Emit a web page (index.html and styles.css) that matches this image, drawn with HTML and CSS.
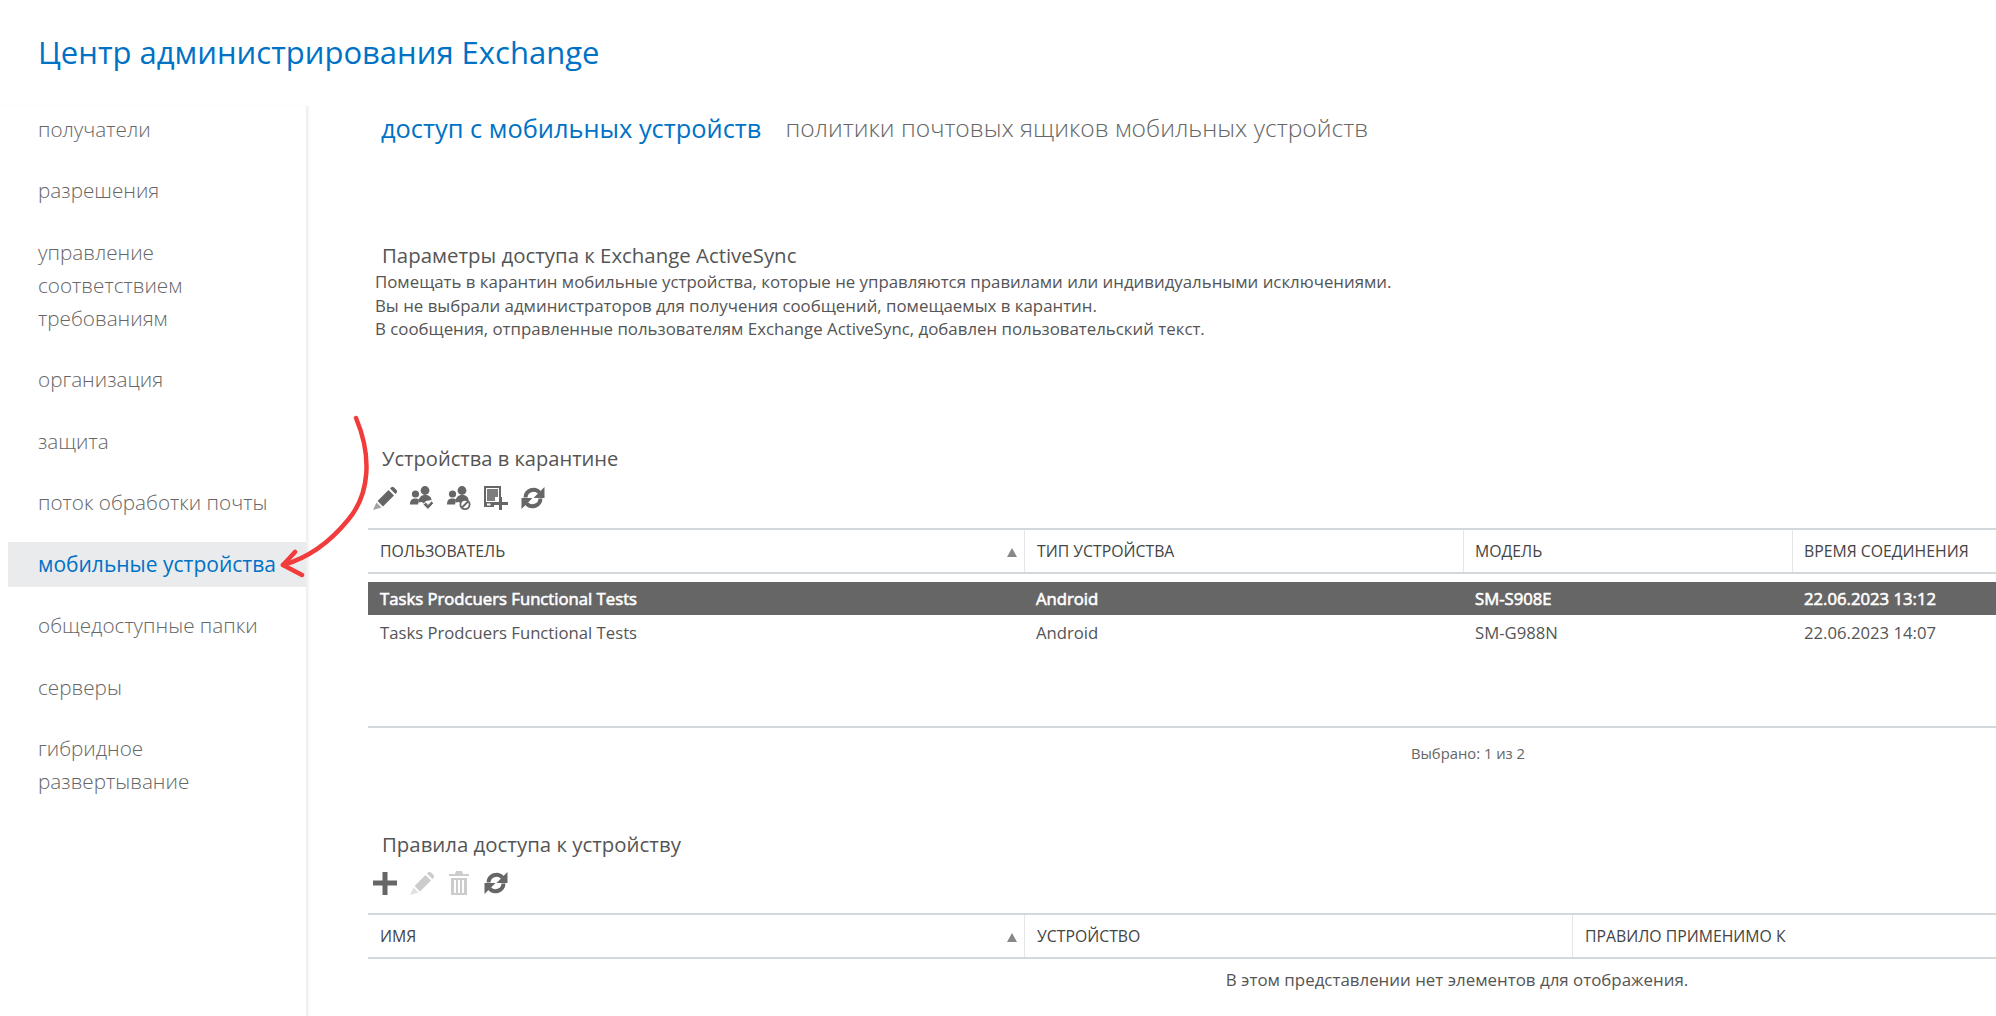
FILE: index.html
```html
<!DOCTYPE html>
<html lang="ru">
<head>
<meta charset="utf-8">
<title>Центр администрирования Exchange</title>
<link rel="stylesheet" href="styles.css">
</head>
<body>
<svg width="0" height="0" class="defs">
  <defs>
    <symbol id="i-pencil" viewBox="0 0 24 24"><path d="M4.500 15L15.500 4 21 9.500 10 20.500z"/><path d="M17 2.500l1-1c1-1 2.200-1 3 0l2.500 2.500c.8.8.8 2 0 3l-1 1z"/><path opacity=".6" d="M3.500 16.500l5 5L0 24z"/></symbol>
    <symbol id="i-people" viewBox="0 0 24 24"><circle cx="5.500" cy="8" r="3.600"/><path d="M0 18.500c0-4.500 2-6 5.500-6 1.500 0 2.500.3 3.500 1L8 18.500z"/><circle cx="15" cy="4.500" r="4.400"/><path d="M8.500 16.500c0-5 2.500-7.500 6.500-7.500s6.500 2 6.500 5l-5.500 1-2 3-2-2z"/></symbol>
    <symbol id="i-device" viewBox="0 0 24 24"><path fill-rule="evenodd" d="M0 0h17v11h-2V2H2v14h8v5H0zM3 17.500h3.500V19.500H3z"/><path class="icon-screen" d="M3 3h11v8h-3v4H3z"/><path d="M15 11h3v5h6v3h-6v5h-3v-5h-5v-3h5z"/></symbol>
    <symbol id="i-refresh" viewBox="0 0 24 24"><path class="icon-arc" d="M4.500 11.500A8 8 0 0 1 18.500 6.500"/><path d="M23.500 1v11h-11z"/><path class="icon-arc" d="M19.500 12.500A8 8 0 0 1 5.500 17.500"/><path d="M.5 23V12h11z"/></symbol>
    <symbol id="i-plus" viewBox="0 0 24 24"><path d="M9.500 1h5v8.500H24v5h-9.500V24h-5v-9.500H0v-5h9.500z"/></symbol>
    <symbol id="i-trash" viewBox="0 0 24 24"><path fill-rule="evenodd" d="M9 0h6l1 3h6v2H2V3h6zM4 7h16v17H4zM7 9v13h2V9zM11 9v13h2V9zM15 9v13h2V9z"/></symbol>
  </defs>
</svg>

<header class="page-header"><h1 class="app-title">Центр администрирования Exchange</h1></header>

<div class="layout">
  <nav class="sidebar">
    <a class="nav-item">получатели</a>
    <a class="nav-item">разрешения</a>
    <a class="nav-item">управление<br>соответствием<br>требованиям</a>
    <a class="nav-item">организация</a>
    <a class="nav-item">защита</a>
    <a class="nav-item">поток обработки почты</a>
    <a class="nav-item nav-item-active">мобильные устройства</a>
    <a class="nav-item">общедоступные папки</a>
    <a class="nav-item">серверы</a>
    <a class="nav-item">гибридное<br>развертывание</a>
  </nav>

  <main class="content">
    <div class="tabs">
      <span class="tab tab-active">доступ с мобильных устройств</span>
      <span class="tab">политики почтовых ящиков мобильных устройств</span>
    </div>

    <section class="settings">
      <h2 class="section-title">Параметры доступа к Exchange ActiveSync</h2>
      <p class="settings-line">Помещать в карантин мобильные устройства, которые не управляются правилами или индивидуальными исключениями.</p>
      <p class="settings-line">Вы не выбрали администраторов для получения сообщений, помещаемых в карантин.</p>
      <p class="settings-line">В сообщения, отправленные пользователям Exchange ActiveSync, добавлен пользовательский текст.</p>
    </section>

    <section class="quarantine">
      <h2 class="section-title section-title-narrow">Устройства в карантине</h2>
      <div class="toolbar">
        <svg class="icon"><use href="#i-pencil"/></svg>
        <svg class="icon" viewBox="0 0 24 24"><use href="#i-people" width="24" height="24"/><path class="icon-check" d="M13 18.500l3-2.500 2 2.500 4-4 1.500 3-5.500 6z"/></svg>
        <svg class="icon" viewBox="0 0 24 24"><use href="#i-people" width="24" height="24"/><circle class="icon-ring" cx="18" cy="18.500" r="4.600"/><path class="icon-slash" d="M15 21.500l6-6"/></svg>
        <svg class="icon"><use href="#i-device"/></svg>
        <svg class="icon"><use href="#i-refresh"/></svg>
      </div>
      <div class="grid grid-devices">
        <div class="grid-head">
          <div class="head-cell head-sorted">ПОЛЬЗОВАТЕЛЬ<span class="sort-arrow"></span></div>
          <div class="head-cell">ТИП УСТРОЙСТВА</div>
          <div class="head-cell">МОДЕЛЬ</div>
          <div class="head-cell">ВРЕМЯ СОЕДИНЕНИЯ</div>
        </div>
        <div class="grid-body">
          <div class="grid-row grid-row-selected"><div class="cell">Tasks Prodcuers Functional Tests</div><div class="cell">Android</div><div class="cell">SM-S908E</div><div class="cell">22.06.2023 13:12</div></div>
          <div class="grid-row"><div class="cell">Tasks Prodcuers Functional Tests</div><div class="cell">Android</div><div class="cell">SM-G988N</div><div class="cell">22.06.2023 14:07</div></div>
        </div>
        <div class="grid-foot">Выбрано: 1 из 2</div>
      </div>
    </section>

    <section class="rules">
      <h2 class="section-title">Правила доступа к устройству</h2>
      <div class="toolbar">
        <svg class="icon"><use href="#i-plus"/></svg>
        <svg class="icon icon-disabled"><use href="#i-pencil"/></svg>
        <svg class="icon icon-disabled"><use href="#i-trash"/></svg>
        <svg class="icon"><use href="#i-refresh"/></svg>
      </div>
      <div class="grid grid-rules">
        <div class="grid-head">
          <div class="head-cell head-sorted">ИМЯ<span class="sort-arrow"></span></div>
          <div class="head-cell">УСТРОЙСТВО</div>
          <div class="head-cell">ПРАВИЛО ПРИМЕНИМО К</div>
        </div>
        <div class="grid-empty">В этом представлении нет элементов для отображения.</div>
      </div>
    </section>
  </main>
</div>

<svg class="annotation" viewBox="0 0 120 200" width="120" height="200">
  <path d="M76 6C92 44 90 82 68 108 50 130 28 146 3 153" />
  <path d="M15 140L3 153 22 163" />
</svg>
</body>
</html>
```

FILE: styles.css
```css
* { box-sizing: border-box; }
html, body { margin: 0; height: 100%; }
body {
  position: relative;
  overflow: hidden;
  background: #fff;
  color: #666;
  font-family: "Open Sans", "Noto Sans", sans-serif;
}
.defs { position: absolute; }
.page-header { height: 106px; padding: 30px 0 0 38px; }
.app-title {
  margin: 0;
  font-size: 31px;
  line-height: 44px;
  font-weight: 400;
  color: #0072c6;
}
.layout { display: flex; height: 910px; }
.sidebar {
  flex: 0 0 308px;
  padding: 0.500px 0 0 8px;
  border-right: 2px solid #f0f0f0;
  box-shadow: 1px 0 2px rgba(0,0,0,.05);
}
.nav-item {
  display: block;
  padding: 6px 0 6px 30px;
  margin-bottom: 16.500px;
  font-size: 20.700px;
  font-weight: 300;
  line-height: 33px;
  color: #666;
}
.nav-item-active { background: #eaebed; color: #0072c6; font-weight: 400; font-size: 21px; }
.content { flex: 1 1 0; min-width: 0; overflow: hidden; padding-left: 60px; }
.tabs { display: flex; gap: 24px; padding: 3px 0 0 13px; height: 127px; }
.tab { font-size: 24.600px; line-height: 38px; font-weight: 300; color: #666; white-space: nowrap; }
.tab-active { color: #0072c6; font-weight: 400; font-size: 25.400px; }
.section-title {
  margin: 0;
  padding-left: 14px;
  font-size: 20.400px;
  font-weight: 400;
  line-height: 30px;
  color: #555;
}
.section-title-narrow { font-size: 20.100px; }
.settings { height: 211px; padding-top: 7px; }
.settings-line { margin: 0; padding-left: 7px; font-size: 16.840px; line-height: 23.500px; color: #555; white-space: nowrap; }
.toolbar { display: flex; gap: 13px; padding: 12px 0 0 5px; height: 54px; }
.icon { width: 24px; height: 24px; fill: #666; color: #666; flex: none; }
.icon-disabled { fill: #ccc; color: #ccc; }
.icon-screen { fill: #7d7d7d; }
.icon-arc { fill: none; stroke: currentColor; stroke-width: 4; }
.icon-check { fill: #666; stroke: #fff; stroke-width: 1; }
.icon-ring { fill: #fff; stroke: #666; stroke-width: 1.800; }
.icon-slash { stroke: #666; stroke-width: 1.800; fill: none; }
.grid { width: 2200px; color: #555; }
.grid-head {
  display: grid;
  height: 46px;
  border-top: 2px solid #d2d8dc;
  border-bottom: 2px solid #d2d8dc;
  font-size: 15.800px;
  align-items: stretch;
}
.grid-devices .grid-head, .grid-row { display: grid; grid-template-columns: 656px 439px 329px 1fr; }
.grid-rules .grid-head { grid-template-columns: 656px 548px 1fr; }
.head-cell {
  position: relative;
  display: flex;
  align-items: center;
  padding-left: 12px;
  border-left: 1px solid #e4e7e9;
  color: #444;
}
.head-cell:first-child { border-left: 0; }
.grid-devices .head-cell:nth-child(n+3) { padding-left: 11px; }
.sort-arrow {
  position: absolute;
  right: 7px;
  top: 18px;
  width: 0;
  height: 0;
  border-left: 5px solid transparent;
  border-right: 5px solid transparent;
  border-bottom: 9px solid #888;
}
.grid-body { padding-top: 8px; height: 154px; border-bottom: 2px solid #d2d8dc; }
.grid-row { height: 33px; font-size: 16.700px; line-height: 33px; }
.grid-row + .grid-row { margin-top: 1px; }
.grid-row-selected { background: #666; color: #fff; -webkit-text-stroke: 0.600px #fff; }
.cell { padding-left: 12px; white-space: nowrap; }
.grid-foot { padding-top: 13px; text-align: center; font-size: 14.800px; line-height: 24px; color: #666; }
.quarantine { height: 385px; }
.grid-empty { padding: 9px 22px 0 0; text-align: center; font-size: 16.900px; line-height: 24px; color: #555; }
.annotation {
  position: absolute;
  left: 280px;
  top: 412px;
  fill: none;
  stroke: #f23b3b;
  stroke-width: 4.500;
  stroke-linecap: round;
  stroke-linejoin: round;
}
```
